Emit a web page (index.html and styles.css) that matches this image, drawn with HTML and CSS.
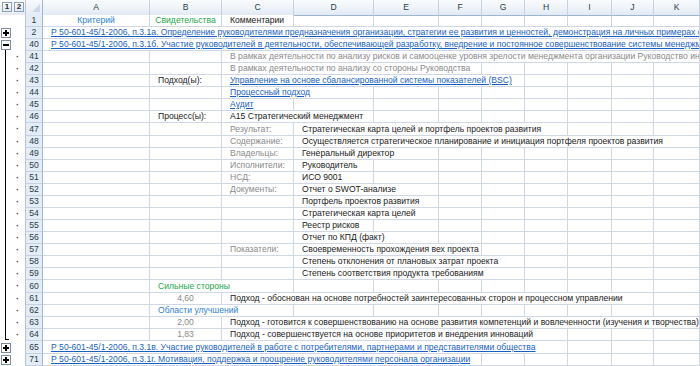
FILE: index.html
```html
<!DOCTYPE html>
<html lang="ru">
<head>
<meta charset="utf-8">
<title>Лист</title>
<link rel="stylesheet" href="styles.css">
</head>
<body>
<div class="sheet">
  <div class="row hdr">
    <div class="gut gut-hdr"><span class="lvl">1</span><span class="lvl">2</span></div>
    <div class="corner"><svg width="17" height="15" viewBox="0 0 17 15"><polygon points="14,4 14,12 6,12" fill="#cfd9e6"/></svg></div>
    <div class="ch">A</div><div class="ch">B</div><div class="ch">C</div><div class="ch">D</div><div class="ch">E</div><div class="ch">F</div><div class="ch">G</div><div class="ch">H</div><div class="ch">I</div><div class="ch">J</div><div class="ch last">K</div>
  </div>

  <div class="row"><div class="gut"></div><div class="rh">1</div>
    <div class="c a center blue">Критерий</div>
    <div class="c b center green">Свидетельства</div>
    <div class="c cc">Комментарии</div>
  </div>

  <div class="row"><div class="gut"><span class="track"><svg class="btn" width="10" height="10" viewBox="0 0 10 10"><rect x="0.5" y="0.5" width="9" height="9" fill="#fff" stroke="#7f8c99"/><path d="M2 5H8M5 2V8" stroke="#000" stroke-width="2"/></svg></span><span class="dotcol"></span></div><div class="rh">2</div>
    <div class="c a to-end link">Р 50-601-45/1-2006, п.3.1а. Определение руководителями предназначения организации, стратегии ее развития и ценностей, демонстрация на личных примерах с</div>
  </div>

  <div class="row"><div class="gut"><span class="track open"><svg class="btn" width="10" height="10" viewBox="0 0 10 10"><rect x="0.5" y="0.5" width="9" height="9" fill="#fff" stroke="#7f8c99"/><path d="M2 5H8" stroke="#000" stroke-width="2"/></svg></span><span class="dotcol"></span></div><div class="rh">40</div>
    <div class="c a to-end link">Р 50-601-45/1-2006, п.3.1б. Участие руководителей в деятельности, обеспечивающей разработку, внедрение и постоянное совершенствование системы менеджм</div>
  </div>

  <div class="row"><div class="gut in"><span class="track"></span><span class="dotcol">·</span></div><div class="rh">41</div>
    <div class="c cc to-end gray">В рамках деятельности по анализу рисков и самооценке уровня зрелости менеджмента организации Руководство ин</div>
  </div>
  <div class="row"><div class="gut in"><span class="track"></span><span class="dotcol">·</span></div><div class="rh">42</div>
    <div class="c cc s4 gray">В рамках деятельности по анализу со стороны Руководства</div>
  </div>
  <div class="row"><div class="gut in"><span class="track"></span><span class="dotcol">·</span></div><div class="rh">43</div>
    <div class="c b">Подход(ы):</div>
    <div class="c cc s5 link">Управление на основе сбалансированной системы показателей (BSC)</div>
  </div>
  <div class="row"><div class="gut in"><span class="track"></span><span class="dotcol">·</span></div><div class="rh">44</div>
    <div class="c cc s2 link">Процессный подход</div>
  </div>
  <div class="row"><div class="gut in"><span class="track"></span><span class="dotcol">·</span></div><div class="rh">45</div>
    <div class="c cc link">Аудит</div>
  </div>
  <div class="row"><div class="gut in"><span class="track"></span><span class="dotcol">·</span></div><div class="rh">46</div>
    <div class="c b">Процесс(ы):</div>
    <div class="c cc s2">А15 Стратегический менеджмент</div>
  </div>
  <div class="row tall"><div class="gut in"><span class="track"></span><span class="dotcol">·</span></div><div class="rh">47</div>
    <div class="c cc gray">Результат:</div>
    <div class="c d s5">Стратегическая карта целей и портфель проектов развития</div>
  </div>
  <div class="row"><div class="gut in"><span class="track"></span><span class="dotcol">·</span></div><div class="rh">48</div>
    <div class="c cc gray">Содержание:</div>
    <div class="c d to-end">Осуществляется стратегическое планирование и инициация портфеля проектов развития</div>
  </div>
  <div class="row"><div class="gut in"><span class="track"></span><span class="dotcol">·</span></div><div class="rh">49</div>
    <div class="c cc gray">Владельцы:</div>
    <div class="c d s2">Генеральный директор</div>
  </div>
  <div class="row"><div class="gut in"><span class="track"></span><span class="dotcol">·</span></div><div class="rh">50</div>
    <div class="c cc gray">Исполнители:</div>
    <div class="c d">Руководитель</div>
  </div>
  <div class="row"><div class="gut in"><span class="track"></span><span class="dotcol">·</span></div><div class="rh">51</div>
    <div class="c cc gray">НСД:</div>
    <div class="c d">ИСО 9001</div>
  </div>
  <div class="row"><div class="gut in"><span class="track"></span><span class="dotcol">·</span></div><div class="rh">52</div>
    <div class="c cc gray">Документы:</div>
    <div class="c d s2">Отчет о SWOT-анализе</div>
  </div>
  <div class="row"><div class="gut in"><span class="track"></span><span class="dotcol">·</span></div><div class="rh">53</div>
    <div class="c d s2">Портфель проектов развития</div>
  </div>
  <div class="row"><div class="gut in"><span class="track"></span><span class="dotcol">·</span></div><div class="rh">54</div>
    <div class="c d s2">Стратегическая карта целей</div>
  </div>
  <div class="row"><div class="gut in"><span class="track"></span><span class="dotcol">·</span></div><div class="rh">55</div>
    <div class="c d">Реестр рисков</div>
  </div>
  <div class="row"><div class="gut in"><span class="track"></span><span class="dotcol">·</span></div><div class="rh">56</div>
    <div class="c d s2">Отчет по КПД (факт)</div>
  </div>
  <div class="row"><div class="gut in"><span class="track"></span><span class="dotcol">·</span></div><div class="rh">57</div>
    <div class="c cc gray">Показатели:</div>
    <div class="c d s3">Своевременность прохождения вех проекта</div>
  </div>
  <div class="row"><div class="gut in"><span class="track"></span><span class="dotcol">·</span></div><div class="rh">58</div>
    <div class="c d s4">Степень отклонения от плановых затрат проекта</div>
  </div>
  <div class="row"><div class="gut in"><span class="track"></span><span class="dotcol">·</span></div><div class="rh">59</div>
    <div class="c d s4">Степень соответствия продукта требованиям</div>
  </div>
  <div class="row tall"><div class="gut in"><span class="track"></span><span class="dotcol">·</span></div><div class="rh">60</div>
    <div class="c b s2 green">Сильные стороны</div>
  </div>
  <div class="row"><div class="gut in"><span class="track"></span><span class="dotcol">·</span></div><div class="rh">61</div>
    <div class="c b center gray">4,60</div>
    <div class="c cc s8">Подход - обоснован на основе потребностей заинтересованных сторон и процессном управлении</div>
  </div>
  <div class="row"><div class="gut in"><span class="track"></span><span class="dotcol">·</span></div><div class="rh">62</div>
    <div class="c b s2 blue">Области улучшений</div>
  </div>
  <div class="row"><div class="gut in"><span class="track"></span><span class="dotcol">·</span></div><div class="rh">63</div>
    <div class="c b center gray">2,00</div>
    <div class="c cc to-end">Подход - готовится к совершенствованию на основе развития компетенций и вовлеченности (изучения и творчества)</div>
  </div>
  <div class="row"><div class="gut in end"><span class="track"></span><span class="dotcol">·</span></div><div class="rh">64</div>
    <div class="c b center gray">1,83</div>
    <div class="c cc s6">Подход - совершенствуется на основе приоритетов и внедрения инноваций</div>
  </div>

  <div class="row tall"><div class="gut"><span class="track"><svg class="btn" width="10" height="10" viewBox="0 0 10 10"><rect x="0.5" y="0.5" width="9" height="9" fill="#fff" stroke="#7f8c99"/><path d="M2 5H8M5 2V8" stroke="#000" stroke-width="2"/></svg></span><span class="dotcol"></span></div><div class="rh">65</div>
    <div class="c a s8 link">Р 50-601-45/1-2006, п.3.1в. Участие руководителей в работе с потребителями, партнерами и представителями общества</div>
  </div>
  <div class="row"><div class="gut"><span class="track"><svg class="btn" width="10" height="10" viewBox="0 0 10 10"><rect x="0.5" y="0.5" width="9" height="9" fill="#fff" stroke="#7f8c99"/><path d="M2 5H8M5 2V8" stroke="#000" stroke-width="2"/></svg></span><span class="dotcol"></span></div><div class="rh">71</div>
    <div class="c a s6 link">Р 50-601-45/1-2006, п.3.1г. Мотивация, поддержка и поощрение руководителями персонала организации</div>
  </div>
</div>
</body>
</html>
```

FILE: styles.css
```css
html, body {
  margin: 0;
  padding: 0;
  background: #ffffff;
}
body {
  width: 700px;
  height: 366px;
  overflow: hidden;
  font-family: "Liberation Sans", Arial, sans-serif;
  font-size: 8.6px;
  color: #1b1b1b;
}
.sheet {
  width: 700px;
}
.row {
  display: grid;
  grid-template-columns: [g] 26px [rh] 17px [A] 107px [B] 72px [C] 72px [D] 80px [E] 65px [F] 43px [G] 43px [H] 43px [I] 44px [J] 42px [K] 46px [end];
  height: 12px;
  --gl: #d0d7e5;
  background-image:
    linear-gradient(var(--gl), var(--gl)),
    linear-gradient(var(--gl), var(--gl)),
    linear-gradient(var(--gl), var(--gl)),
    linear-gradient(var(--gl), var(--gl)),
    linear-gradient(var(--gl), var(--gl)),
    linear-gradient(var(--gl), var(--gl)),
    linear-gradient(var(--gl), var(--gl)),
    linear-gradient(var(--gl), var(--gl)),
    linear-gradient(var(--gl), var(--gl)),
    linear-gradient(var(--gl), var(--gl)),
    linear-gradient(var(--gl), var(--gl)),
    linear-gradient(var(--gl), var(--gl));
  background-repeat: no-repeat;
  background-size: 1px 100%, 1px 100%, 1px 100%, 1px 100%, 1px 100%, 1px 100%, 1px 100%, 1px 100%, 1px 100%, 1px 100%, 1px 100%, 100% 1px;
  background-position: 149px 0, 221px 0, 293px 0, 373px 0, 438px 0, 481px 0, 524px 0, 567px 0, 611px 0, 653px 0, 699px 0, 0 100%;
}
.row.tall {
  height: 13px;
}
.row.tall .c,
.row.tall .rh {
  line-height: 12px;
}
.row.hdr {
  height: 15px;
  background: none;
}

/* outline gutter */
.gut {
  grid-column: g;
  background: #ffffff;
  display: flex;
  align-items: stretch;
  border-right: 1px solid #b8c6d6;
  box-sizing: border-box;
}
.track {
  width: 11px;
  display: flex;
  align-items: center;
  justify-content: center;
  position: relative;
}
.track.open::after {
  content: "";
  position: absolute;
  left: 5px;
  top: 11px;
  height: 2px;
  width: 1px;
  background: #000;
}
.gut.in .track {
  justify-content: flex-start;
  padding-left: 5px;
  box-sizing: border-box;
}
.gut.in .track::before {
  content: "";
  width: 1px;
  height: 100%;
  background: #000;
}
.gut.in.end .track::before {
  height: 11px;
  width: 4px;
  box-sizing: border-box;
  border-left: 1px solid #000;
  border-bottom: 1px solid #000;
  background: none;
}
.gut.in.end .track {
  align-items: flex-start;
}
.dotcol {
  width: 13px;
  text-align: center;
  line-height: 12px;
  font-size: 9px;
  font-weight: bold;
  color: #3a3a3a;
}
.btn {
  display: block;
}
.gut-hdr {
  background: linear-gradient(#f8fafc, #e6ebf1);
  border-bottom: 1px solid #9eb6ce;
  gap: 2px;
  padding: 2px 1px 1px 2px;
}
.lvl {
  width: 10px;
  height: 10px;
  box-sizing: border-box;
  border: 1px solid #8ea2b7;
  background: linear-gradient(#ffffff, #dfe6ee);
  font-size: 8px;
  line-height: 8px;
  text-align: center;
  color: #1b2b3c;
  font-weight: bold;
}

/* headers */
.corner {
  grid-column: rh;
  background: linear-gradient(#f7f9fc, #e4ecf7);
  border-right: 1px solid #9eb6ce;
  border-bottom: 1px solid #9eb6ce;
  box-sizing: border-box;
}
.corner svg {
  display: block;
}
.ch {
  background: linear-gradient(#f9fbfd 0%, #eef3f9 55%, #e2e9f3 100%);
  border-right: 1px solid #c5d1de;
  border-bottom: 1px solid #9eb6ce;
  box-sizing: border-box;
  text-align: center;
  line-height: 14px;
  color: #27413e;
  font-size: 8.6px;
}
.rh {
  grid-column: rh;
  background: #e4ecf7;
  border-right: 1px solid #9eb6ce;
  border-bottom: 1px solid #c5d1de;
  box-sizing: border-box;
  text-align: center;
  line-height: 11px;
  color: #27413e;
}

/* cells */
.c {
  background: #ffffff;
  border-right: 1px solid #d0d7e5;
  border-bottom: 1px solid #d0d7e5;
  box-sizing: border-box;
  padding-left: 8px;
  line-height: 11px;
  white-space: nowrap;
  overflow: hidden;
}
.a { grid-column-start: A; }
.b { grid-column-start: B; }
.cc { grid-column-start: C; }
.d { grid-column-start: D; }
.s2 { grid-column-end: span 2; }
.s3 { grid-column-end: span 3; }
.s4 { grid-column-end: span 4; }
.s5 { grid-column-end: span 5; }
.s6 { grid-column-end: span 6; }
.s8 { grid-column-end: span 8; }
.to-end { grid-column-end: end; }

.center { text-align: center; padding-left: 0; }
.blue { color: #2f7fd1; }
.green { color: #1ea64a; }
.gray { color: #8a8a8a; }
.link {
  color: #1a5fc2;
  text-decoration: underline;
}
```
